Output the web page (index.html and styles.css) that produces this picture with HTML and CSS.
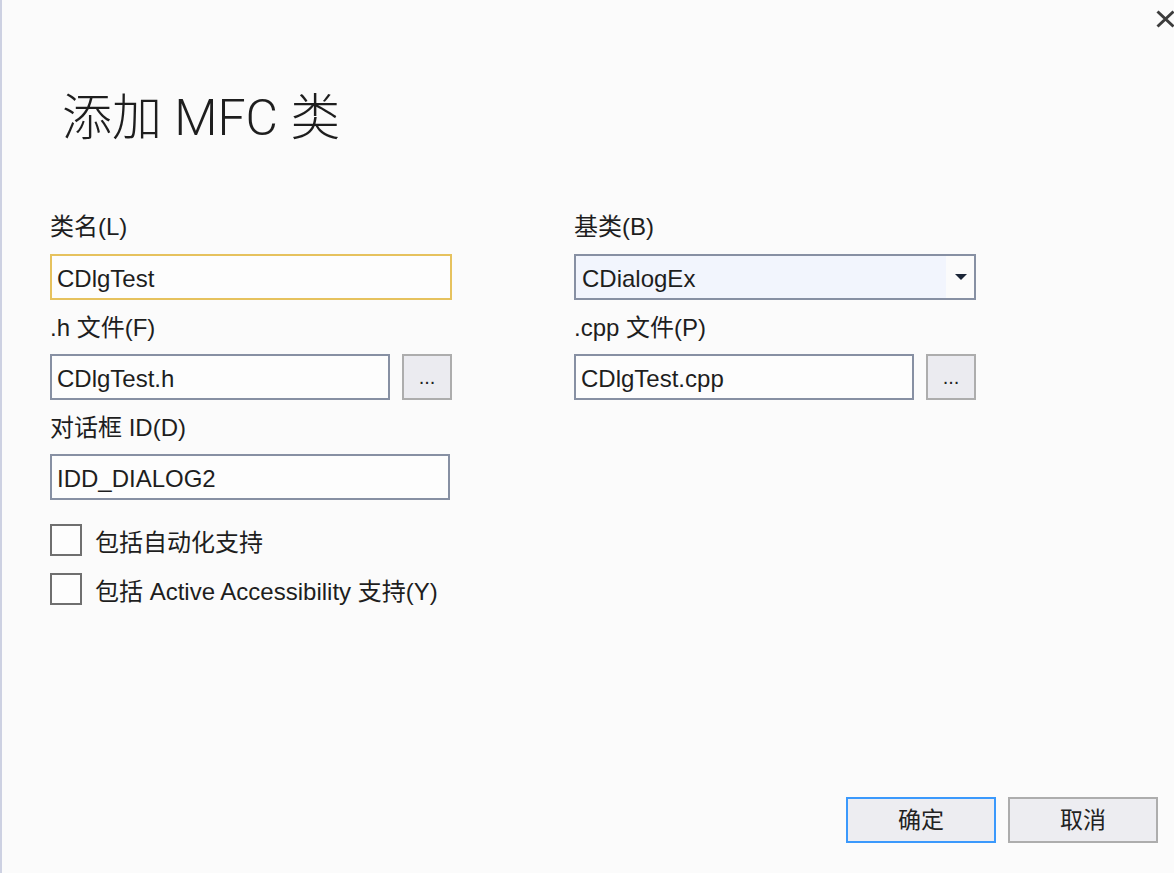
FILE: index.html
```html
<!DOCTYPE html>
<html lang="zh-CN">
<head>
<meta charset="utf-8">
<title>添加 MFC 类</title>
<link rel="stylesheet" href="styles.css">
</head>
<body>
<div class="dialog">
  <div class="titlebar">
    <svg class="close" width="19" height="18" viewBox="0 0 19 18" aria-label="关闭">
      <path d="M1.5 1.5 L17.5 16.5 M17.5 1.5 L1.5 16.5" stroke="#3c3c3c" stroke-width="3" fill="none"/>
    </svg>
  </div>
  <h1 class="title">添加 MFC 类</h1>
  <div class="form">
    <div class="col">
      <div class="label">类名(L)</div>
      <div class="field focused">CDlgTest</div>
      <div class="label">.h 文件(F)</div>
      <div class="row">
        <div class="field short">CDlgTest.h</div>
        <div class="browse">...</div>
      </div>
      <div class="label">对话框 ID(D)</div>
      <div class="field dlgid">IDD_DIALOG2</div>
      <div class="checks">
        <div class="check"><span class="box"></span><span>包括自动化支持</span></div>
        <div class="check"><span class="box"></span><span>包括 Active Accessibility 支持(Y)</span></div>
      </div>
    </div>
    <div class="col">
      <div class="label">基类(B)</div>
      <div class="combo">
        <div class="combo-text">CDialogEx</div>
        <div class="combo-arrow">
          <svg width="12" height="6" viewBox="0 0 12 6"><path d="M0 0 H12 L6 6 Z" fill="#1b2537"/></svg>
        </div>
      </div>
      <div class="label">.cpp 文件(P)</div>
      <div class="row">
        <div class="field short">CDlgTest.cpp</div>
        <div class="browse">...</div>
      </div>
    </div>
  </div>
  <div class="footer">
    <div class="btn primary">确定</div>
    <div class="btn">取消</div>
  </div>
</div>
</body>
</html>
```

FILE: styles.css
```css
html, body {
  margin: 0;
  padding: 0;
  overflow: hidden;
}
body {
  width: 1174px;
  height: 873px;
  font-family: "Liberation Sans", "Noto Sans CJK SC", sans-serif;
  font-size: 24px;
  color: #1e1e1e;
  background: #fbfbfb;
}
.dialog {
  box-sizing: border-box;
  width: 1174px;
  height: 873px;
  border-left: 2px solid #cdd1e2;
  background: #fbfbfb;
  display: flex;
  flex-direction: column;
  padding-left: 48px;
}
.titlebar {
  height: 40px;
  display: flex;
  justify-content: flex-end;
}
.close {
  margin-top: 10px;
  margin-right: -1px;
}
.title {
  margin: 50px 0 0 12px;
  font-family: "Roboto", "Noto Sans CJK SC", sans-serif;
  font-weight: 300;
  font-size: 50px;
  line-height: 56px;
  height: 56px;
  color: #1e1e1e;
}
.form {
  flex: 1;
  display: flex;
  gap: 122px;
  margin-top: 53px;
}
.col {
  width: 402px;
  display: flex;
  flex-direction: column;
}
.label {
  height: 54px;
  line-height: 55px;
}
.col > .label:first-child {
  height: 55px;
}
.field {
  box-sizing: border-box;
  height: 46px;
  border: 2px solid #8790a3;
  background: #fdfdfd;
  padding-left: 5px;
  line-height: 45px;
  white-space: nowrap;
}
.field.focused {
  border-color: #e6c25e;
}
.field.dlgid {
  width: 400px;
}
.row {
  display: flex;
  gap: 12px;
}
.field.short {
  width: 340px;
}
.browse {
  box-sizing: border-box;
  width: 50px;
  height: 46px;
  border: 2px solid #adadad;
  background: #ebebf0;
  text-align: center;
  line-height: 42px;
  font-size: 20px;
  color: #222;
}
.combo {
  box-sizing: border-box;
  height: 46px;
  border: 2px solid #8790a3;
  display: flex;
}
.combo-text {
  flex: 1;
  background: #f2f5fd;
  padding-left: 6px;
  line-height: 45px;
}
.combo-arrow {
  width: 27px;
  background: #fbfbfb;
  display: flex;
  align-items: center;
  justify-content: center;
  padding-left: 1px;
}
.checks {
  display: flex;
  flex-direction: column;
  gap: 17px;
  margin-top: 24px;
}
.check {
  display: flex;
  align-items: center;
  gap: 13px;
  height: 32px;
}
.box {
  box-sizing: border-box;
  width: 32px;
  height: 32px;
  border: 2px solid #6f6f6f;
  background: #fdfdfd;
  flex: none;
}
.footer {
  display: flex;
  justify-content: flex-end;
  gap: 12px;
  padding: 0 16px 30px 0;
}
.btn {
  box-sizing: border-box;
  width: 150px;
  height: 46px;
  border: 2px solid #adadad;
  background: #ededf1;
  text-align: center;
  line-height: 42px;
  font-size: 23px;
  color: #222;
}
.btn.primary {
  border-color: #3b99fc;
}
```
